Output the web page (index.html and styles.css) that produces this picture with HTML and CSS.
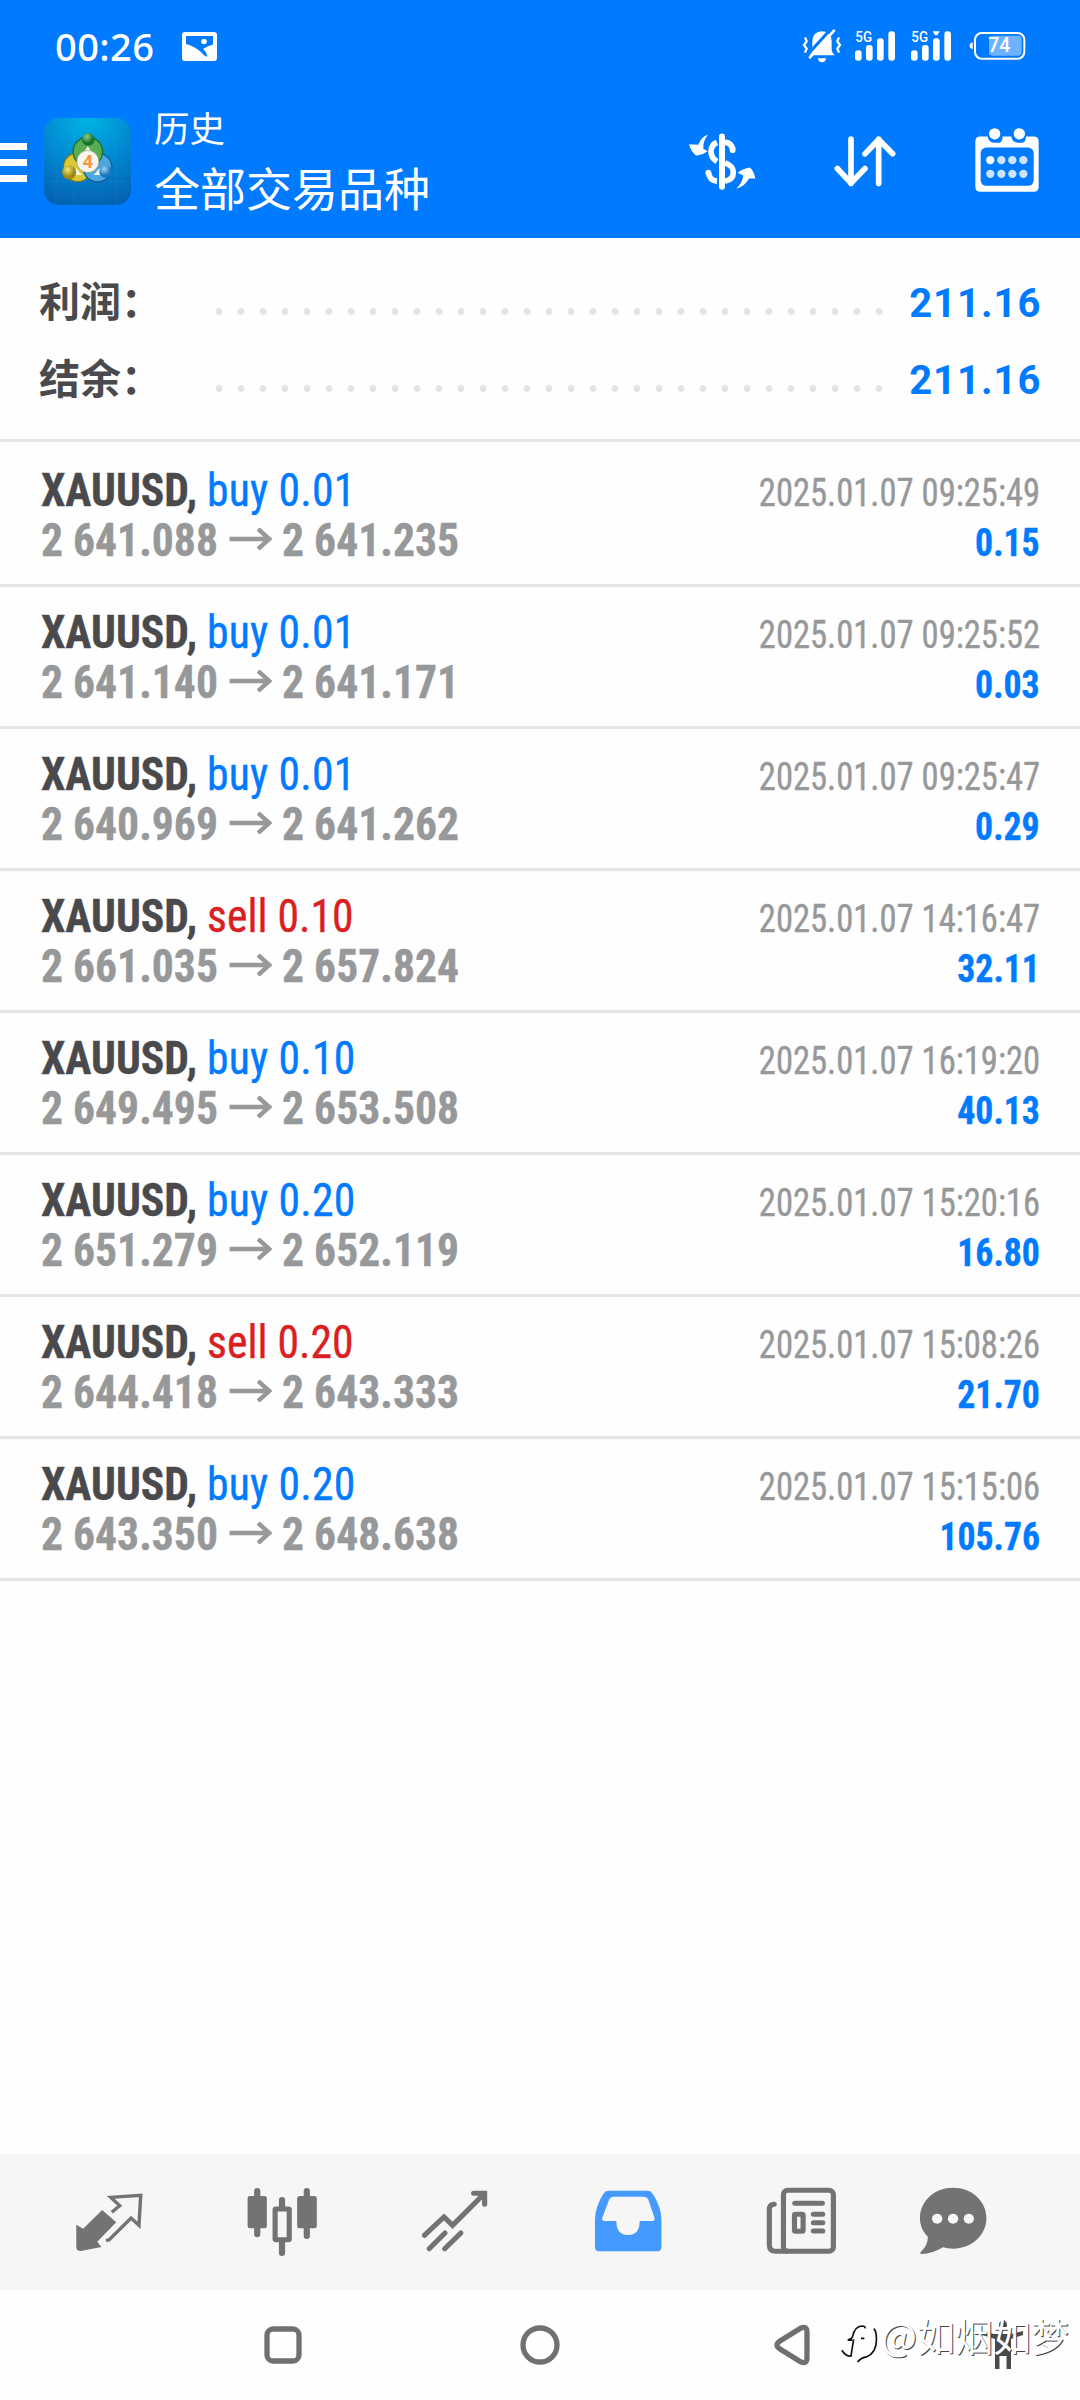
FILE: index.html
```html
<!DOCTYPE html>
<html lang="zh-CN">
<head>
<meta charset="utf-8">
<title>历史</title>
<link rel="stylesheet" href="styles.css">
</head>
<body>
<div class="screen">
  <header class="top">
    <div class="status">
      <span class="clock">00:26</span>
      <svg class="s-pic" viewBox="0 0 35 29"><rect width="35" height="29" rx="3" fill="#fff"/><path d="M4 4h27v8.500Q25 14 21 17q4 3 4 8-4-2-6-5-7-6-15-8z" fill="#007aff"/><circle cx="22" cy="9.500" r="2.800" fill="#fff"/></svg>
      <svg class="s-right" viewBox="480 80 690 120">
        <g fill="#fff">
          <path d="M507 165h78q-10-8-10-20v-22q0-29-29-30-28 1-29 30v22q0 12-10 20z"/>
          <path d="M533 174h26q-3 12-13 12t-13-12z"/>
          <path d="M502 164l74-82" stroke="#007aff" stroke-width="9"/>
          <path d="M510 171l72-80" stroke="#fff" stroke-width="8" stroke-linecap="round"/>
          <path d="M495 111l5 12-8 11 8 11-5 12M597 111l-5 12 8 11-8 11 5 12" fill="none" stroke="#fff" stroke-width="7"/>
          <g id="bars"><rect x="645" y="150" width="20" height="31" rx="9"/><rect x="678" y="134" width="20" height="47" rx="9"/><rect x="711" y="114" width="20" height="67" rx="9"/><rect x="745" y="93" width="20" height="88" rx="9"/></g>
          <use href="#bars" x="168"/>
          <path d="M878 93h21l-7 12h-7z"/>
          <path d="M998 126q-9 2-9 10t9 10z"/>
        </g>
        <rect x="1047" y="106" width="98" height="60" rx="10" fill="#6fb2ff"/>
        <rect x="1005" y="98" width="148" height="77" rx="20" fill="none" stroke="#fff" stroke-width="6"/>
        <g fill="#fff" font-family="Roboto, sans-serif" font-weight="500"><text x="646" y="126" font-size="43" textLength="50" lengthAdjust="spacingAndGlyphs">5G</text><text x="814" y="126" font-size="43" textLength="50" lengthAdjust="spacingAndGlyphs">5G</text><text x="1045" y="156" font-size="59" textLength="66" lengthAdjust="spacingAndGlyphs">74</text></g>
      </svg>
    </div>
    <div class="appbar">
      <div class="menu"><i></i><i></i><i></i></div>
      <svg class="logo" viewBox="0 0 260 260">
        <defs>
          <radialGradient id="bg" cx=".5" cy="0" r="1"><stop offset="0" stop-color="#00b4e4"/><stop offset=".5" stop-color="#028bd3"/><stop offset="1" stop-color="#0464b4"/></radialGradient>
          <radialGradient id="gr" cx=".4" cy=".3"><stop offset="0" stop-color="#8fd08a"/><stop offset="1" stop-color="#16752a"/></radialGradient>
          <radialGradient id="ye" cx=".4" cy=".3"><stop offset="0" stop-color="#f3e87e"/><stop offset="1" stop-color="#9c8710"/></radialGradient>
          <radialGradient id="bl" cx=".4" cy=".3"><stop offset="0" stop-color="#9bd6f8"/><stop offset="1" stop-color="#1c78bd"/></radialGradient>
        </defs>
        <rect width="260" height="260" rx="44" fill="url(#bg)"/>
        <path d="M0 84h260M0 190h260M36 0v260M88 0v260M216 0v260" stroke="#38b6e8" stroke-opacity=".2" stroke-width="2"/>
        <circle cx="101" cy="147" r="43" fill="#d8c83a" stroke="#81781c" stroke-width="4"/>
        <circle cx="160" cy="148" r="43" fill="#4ba7df" stroke="#145c93" stroke-width="4"/>
        <path d="M98 130a44 44 0 1 1 66 0z" fill="#58ad55" stroke="#1d6b2c" stroke-width="4"/>
        <path d="M131 84l12 18h-24zM96 150l-12 20h30zM166 150l10 20h-28z" fill="#f2f6e4"/>
        <circle cx="132" cy="64" r="19" fill="url(#gr)"/><circle cx="75" cy="163" r="21" fill="url(#ye)"/><circle cx="184" cy="160" r="19" fill="url(#bl)"/>
        <circle cx="131" cy="130" r="33" fill="#f7f4f2" stroke="#8b9a72" stroke-width="2"/>
        <text x="131" y="150" text-anchor="middle" font-family="Roboto, sans-serif" font-size="56" font-weight="700" fill="#f59a3c">4</text>
      </svg>
      <div class="titles"><div class="t1">历史</div><div class="t2">全部交易品种</div></div>
      <div class="actions">
        <svg viewBox="138 376.500 216 216" fill="none" stroke="#fff">
          <path d="M246 408v151" stroke-width="18" stroke-linecap="round"/>
          <path d="M231 426q-18 7-18 27 0 19 18 30M255 425q20 2 23 22M205 515q4 26 26 27" stroke-width="17"/>
          <path d="M278 445v4M205 517v-1" stroke-width="17" stroke-linecap="round"/>
          <path d="M255 487q25 9 25 28 0 22-25 27" stroke-width="17"/>
          <path d="M204 402q-20 6-29 31l-28-2q6 22 22 35 18-2 34-14l-13-7q-2-22 14-43zM289 565q26-8 38-31h19q-3-20-16-33-20 3-37 16l17 8q-2 20-21 40z" fill="#fff" stroke="none"/>
        </svg>
        <svg viewBox="567 376.500 216 216" fill="none" stroke="#fff" stroke-width="17" stroke-linecap="round" stroke-linejoin="round"><path d="M633 416v133M592 504l41 44 42-44M716 549V416M675 460l41-43 42 43"/></svg>
        <svg viewBox="992 376.500 216 216">
          <path d="M1020 408h22q2 18 20 19h14q10-1 11-19h26q2 18 20 19h13q10-1 11-19h23q15 0 15 15v136q0 15-15 15h-160q-15 0-15-15V423q0-15 15-15z" fill="#fff"/>
          <rect x="1021" y="441" width="159" height="115" rx="17" fill="#007aff"/>
          <g fill="#fff"><circle cx="1063" cy="400" r="17"/><circle cx="1137" cy="400" r="17"/><circle cx="1050" cy="479" r="12.500"/></g>
          <g fill="#cce4ff"><circle cx="1083" cy="479" r="12.500"/><circle cx="1116" cy="479" r="12.500"/><circle cx="1149" cy="479" r="12.500"/><circle cx="1050" cy="520" r="12.500"/><circle cx="1083" cy="520" r="12.500"/><circle cx="1116" cy="520" r="12.500"/><circle cx="1149" cy="520" r="12.500"/></g>
        </svg>
      </div>
    </div>
  </header>

  <section class="summary">
    <div class="sum"><span class="label">利润：</span><span class="dots"></span><b>211.16</b></div>
    <div class="sum"><span class="label">结余：</span><span class="dots"></span><b>211.16</b></div>
  </section>

  <main class="deals">
    <div class="deal"><div class="line"><span class="name"><b>XAUUSD,</b> <span class="buy">buy 0.01</span></span><span class="date">2025.01.07 09:25:49</span></div><div class="line"><span class="price">2 641.088<svg viewBox="0 0 46 22"><path d="M0 11h43M31 1l12 10-12 10"/></svg>2 641.235</span><span class="profit">0.15</span></div></div>
    <div class="deal"><div class="line"><span class="name"><b>XAUUSD,</b> <span class="buy">buy 0.01</span></span><span class="date">2025.01.07 09:25:52</span></div><div class="line"><span class="price">2 641.140<svg viewBox="0 0 46 22"><path d="M0 11h43M31 1l12 10-12 10"/></svg>2 641.171</span><span class="profit">0.03</span></div></div>
    <div class="deal"><div class="line"><span class="name"><b>XAUUSD,</b> <span class="buy">buy 0.01</span></span><span class="date">2025.01.07 09:25:47</span></div><div class="line"><span class="price">2 640.969<svg viewBox="0 0 46 22"><path d="M0 11h43M31 1l12 10-12 10"/></svg>2 641.262</span><span class="profit">0.29</span></div></div>
    <div class="deal"><div class="line"><span class="name"><b>XAUUSD,</b> <span class="sell">sell 0.10</span></span><span class="date">2025.01.07 14:16:47</span></div><div class="line"><span class="price">2 661.035<svg viewBox="0 0 46 22"><path d="M0 11h43M31 1l12 10-12 10"/></svg>2 657.824</span><span class="profit">32.11</span></div></div>
    <div class="deal"><div class="line"><span class="name"><b>XAUUSD,</b> <span class="buy">buy 0.10</span></span><span class="date">2025.01.07 16:19:20</span></div><div class="line"><span class="price">2 649.495<svg viewBox="0 0 46 22"><path d="M0 11h43M31 1l12 10-12 10"/></svg>2 653.508</span><span class="profit">40.13</span></div></div>
    <div class="deal"><div class="line"><span class="name"><b>XAUUSD,</b> <span class="buy">buy 0.20</span></span><span class="date">2025.01.07 15:20:16</span></div><div class="line"><span class="price">2 651.279<svg viewBox="0 0 46 22"><path d="M0 11h43M31 1l12 10-12 10"/></svg>2 652.119</span><span class="profit">16.80</span></div></div>
    <div class="deal"><div class="line"><span class="name"><b>XAUUSD,</b> <span class="sell">sell 0.20</span></span><span class="date">2025.01.07 15:08:26</span></div><div class="line"><span class="price">2 644.418<svg viewBox="0 0 46 22"><path d="M0 11h43M31 1l12 10-12 10"/></svg>2 643.333</span><span class="profit">21.70</span></div></div>
    <div class="deal"><div class="line"><span class="name"><b>XAUUSD,</b> <span class="buy">buy 0.20</span></span><span class="date">2025.01.07 15:15:06</span></div><div class="line"><span class="price">2 643.350<svg viewBox="0 0 46 22"><path d="M0 11h43M31 1l12 10-12 10"/></svg>2 648.638</span><span class="profit">105.76</span></div></div>
  </main>

  <nav class="tabs">
    <svg viewBox="197.800 126 232.300 240" preserveAspectRatio="none"><path d="M219 254l20 12 55-56 41 37-55 58 12 16-60 12q-13 0-13-13z" fill="#737373"/><path d="M322 217l23-20-26-25 87-6-5 90-23-22-64 66-9 1" fill="none" stroke="#737373" stroke-width="10"/></svg>
    <svg viewBox="699.800 126 232.300 240" preserveAspectRatio="none"><g fill="#737373"><rect x="716" y="168" width="56" height="97" rx="7"/><rect x="860" y="168" width="57" height="97" rx="7"/></g><g fill="none" stroke="#737373"><path d="M744 153v130M888 153v135M816 180v20M816 305v34" stroke-width="18" stroke-linecap="round"/><rect x="796" y="207" width="41" height="92" stroke-width="15" rx="2"/></g></svg>
    <svg viewBox="1203.800 126 232.300 240" preserveAspectRatio="none" fill="none" stroke="#737373" stroke-width="15" stroke-linecap="round"><path d="M1231 286l57-55 25 25 91-94M1374 160h32v33M1245 326l46-47M1290 326l47-47"/></svg>
    <svg viewBox="137.800 126 232.300 240" preserveAspectRatio="none"><path fill="#459aff" fill-rule="evenodd" d="M196 152h116q8 0 14 10 24 38 25 76v82q0 14-14 14H172q-14 0-14-14v-82q1-38 24-76 6-10 14-10zM213 170q-10 0-14 9l-20 55q-2 9 8 9h33q0 42 34 42t34-42h36q9 0 7-9l-18-55q-4-9-14-9z"/></svg>
    <svg viewBox="640.800 126 232.300 240" preserveAspectRatio="none" fill="none" stroke="#737373" stroke-width="15"><rect x="706" y="151" width="145" height="183" rx="13"/><path d="M678 193q-13 1-13 17v104q0 20 20 20h34" /><path d="M678 193h1M739 190h80M793 223h27M793 248h27M793 273h27" stroke-linecap="round"/><rect x="738" y="223" width="25" height="51" rx="3"/></svg>
    <svg viewBox="1082.800 126 232.300 240" preserveAspectRatio="none"><path d="M1199 143c54 0 97 40 97 91s-43 92-97 92q-16 0-29-4-32 20-62 20-8-1-2-7 20-20 20-45c-15-15-23-34-23-56 0-51 43-91 96-91z" fill="#737373"/><g fill="#f7f7f7"><circle cx="1153" cy="236" r="15"/><circle cx="1199" cy="236" r="15"/><circle cx="1245" cy="236" r="15"/></g></svg>
  </nav>
  <footer class="sysnav">
    <svg viewBox="0 0 50 50"><rect x="9" y="9" width="32" height="32" rx="6"/></svg>
    <svg viewBox="0 0 50 50"><circle cx="25" cy="25" r="17"/></svg>
    <svg viewBox="0 0 50 50"><path d="M34 8q6-2 6 4v26q0 6-6 4L13 29q-6-4 0-8z"/></svg>
    <svg class="figure" viewBox="0 0 50 50"><circle cx="25" cy="5" r="4"/><path d="M4 11l12 3h17l12-3v4l-12 4v30h-4.500V36h-7v13H17V19L4 15z"/></svg>
    <div class="mark">
      <svg viewBox="30 40 115 125"><path d="M54 92q10-1 13-9 6-30 28-31 11 0 9 7M52 94h14M92 89h10M70 92l-8 50q-16 0-27-18M130 60q8 6 8 32 0 40-30 52-18 4-26 15"/></svg>
      <span>@如烟如梦</span>
    </div>
  </footer>
</div>
</body>
</html>
```
FILE: styles.css
```css
* { box-sizing: border-box; }
body { margin: 0; background: #fff; font-family: Roboto, "Noto Sans CJK SC", sans-serif; }
svg { display: block; flex: none; }
.screen { width: 1080px; height: 2400px; display: flex; flex-direction: column; background: #fefefe; }

.top { height: 238px; background: #007aff; color: #fff; }
.status { height: 85px; display: flex; align-items: center; padding: 7px 50px 0 55px; }
.clock { width: 127px; font: 500 38px/50px "Noto Sans", sans-serif; letter-spacing: .4px; white-space: nowrap; }
.s-pic { width: 35px; height: 29px; margin-top: 1px; }
.s-right { width: 230px; height: 40px; margin: 2px 0 0 auto; }
.appbar { height: 153px; display: flex; align-items: center; padding-right: 37px; }
.menu { width: 44px; display: flex; flex-direction: column; gap: 9px; padding-top: 2px; }
.menu i { width: 27px; height: 7px; background: #fff; }
.logo { width: 87px; height: 87px; }
.titles { margin-left: 23px; padding-bottom: 2px; font-family: "Noto Sans CJK SC", sans-serif; white-space: nowrap; }
.t1 { font-size: 35.500px; line-height: 50px; }
.t2 { font-size: 46px; line-height: 68px; }
.actions { margin-left: auto; display: flex; gap: 70.500px; }
.actions svg { width: 72px; height: 72px; }

.summary { height: 204px; padding: 25px 38.500px 0 39px; border-bottom: 3px solid #e5e5e5; }
.sum { display: flex; height: 77px; align-items: center; }
.label { width: 169px; padding-bottom: 4px; font: 700 41px/73px "Noto Sans CJK SC", sans-serif; color: #4a4a4c; white-space: nowrap; }
.dots { width: 682px; height: 7px; margin-top: 19px; background: radial-gradient(circle at 11px 3.500px, #e3e3e3 3px, transparent 3.800px) 0 0 / 22px 7px repeat-x; }
.sum b { flex: 1; padding-top: 3px; font-size: 40px; letter-spacing: 1px; text-align: right; color: #007aff; }

.deals { flex: 1; padding-top: 3px; font-family: "Roboto Condensed", Roboto, sans-serif; font-stretch: 75%; }
.deal { height: 142px; padding: 20px 40px 0; border-bottom: 3px solid #e5e5e5; }
.line { display: flex; justify-content: space-between; align-items: baseline; height: 50px; line-height: 50px; font-size: 47px; white-space: nowrap; -webkit-text-stroke: .4px currentColor; }
.name, .price { transform: scaleX(.928); transform-origin: 0 50%; }
.date { transform: scaleX(.91); transform-origin: 100% 50%; }
.profit { transform: scaleX(.94); transform-origin: 100% 50%; }
.name { padding-left: 1px; }
.name b { color: #4a4a4c; }
.buy { color: #007aff; letter-spacing: .2px; }
.sell { color: #da1f22; }
.price { padding-left: 1px; font-weight: 700; color: #969899; }
.price svg { display: inline-block; width: 46px; height: 22px; margin: 0 11px 6px 12px; fill: none; stroke: #969899; stroke-width: 4.600; }
.date { font-size: 38px; color: #969899; }
.profit { font-size: 38px; font-weight: 700; color: #007aff; }

.tabs { height: 136px; background: #f6f6f6; display: flex; align-items: center; padding-left: 68.500px; gap: 93px; }
.tabs svg { width: 80px; height: 80px; }
.tabs svg:last-child { margin-left: -20.500px; }
.sysnav { position: relative; height: 110px; display: flex; align-items: center; padding-left: 258px; }
.sysnav svg { width: 50px; height: 50px; fill: none; stroke: #707070; stroke-width: 5.300; }
.sysnav > svg:nth-child(2) { margin-left: 207px; }
.sysnav > svg:nth-child(3) { margin-left: 202px; }
.sysnav > .figure { margin-left: 161px; fill: #4a4a4a; stroke: none; }
.mark { position: absolute; left: 840px; top: 17px; height: 56px; display: flex; align-items: center; color: #fff; font: 400 38px/56px "Noto Sans CJK SC", sans-serif; text-shadow: 1px 1px 0 #444; white-space: nowrap; }
.mark svg { width: 39px; height: 42px; margin: 16px 2px 0 0; stroke: #111; stroke-width: 5; }
```
